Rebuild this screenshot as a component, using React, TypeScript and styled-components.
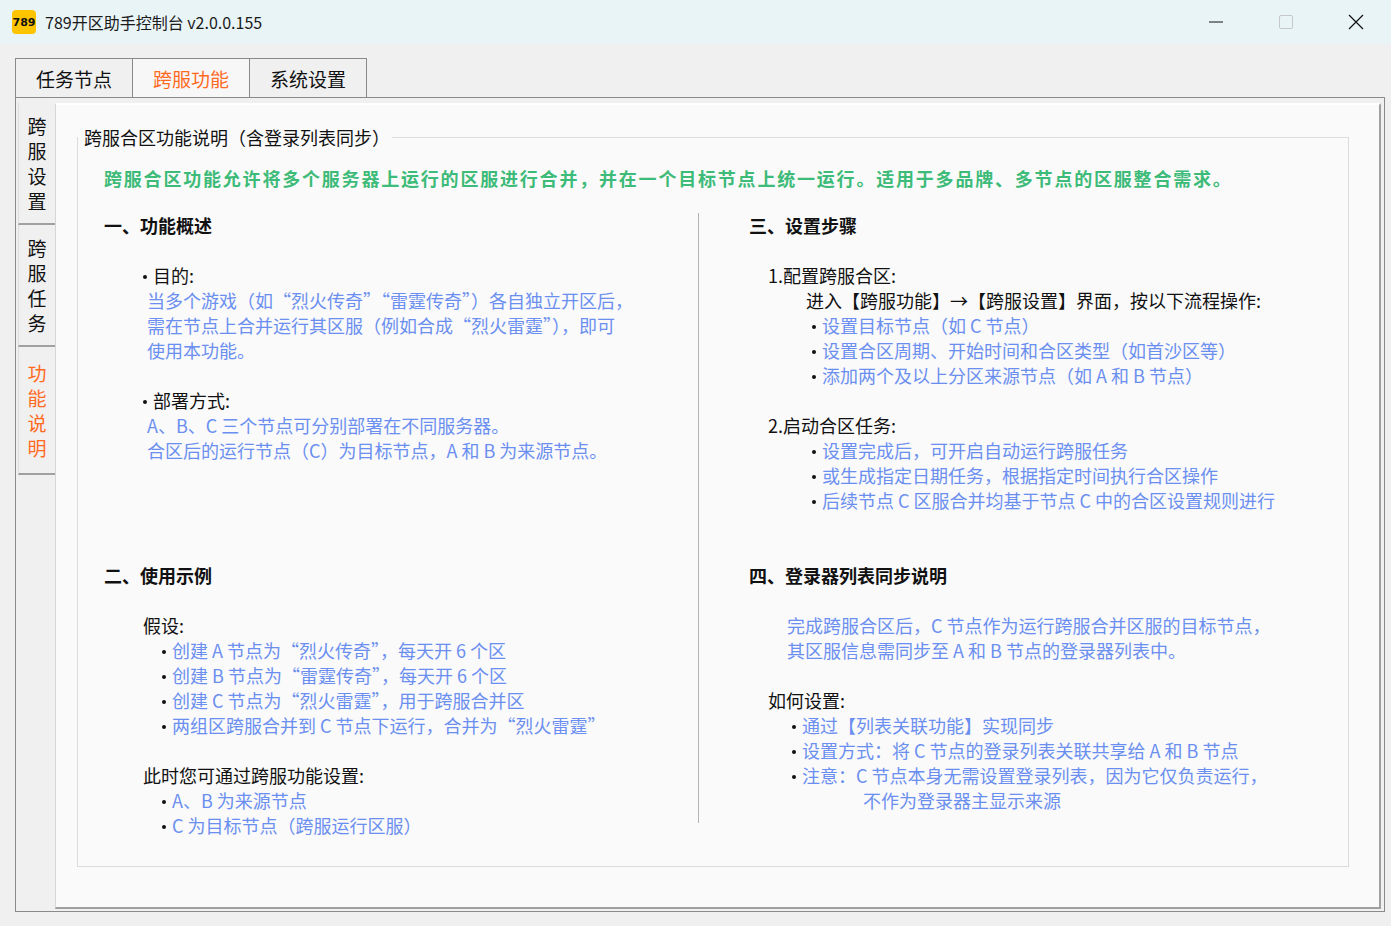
import React from 'react';
import styled, { createGlobalStyle } from 'styled-components';

const Global = createGlobalStyle`
  html, body { margin: 0; padding: 0; background: #f0f0f0; }
  body { font-family: "Noto Sans CJK SC", "Noto Sans", sans-serif; }
`;

const Window = styled.div`
  width: 1391px;
  height: 926px;
  background: #f0f0f0;
  display: flex;
  flex-direction: column;
  overflow: hidden;
`;

const TitleBar = styled.div`
  height: 44px;
  flex: none;
  background: #e9f4f6;
  display: flex;
  align-items: center;
  padding-left: 12px;
  font-size: 16px;
  color: #1a1a1a;
`;

const Logo = styled.div`
  width: 24px;
  height: 24px;
  border-radius: 4px;
  background: #ffc400;
  color: #111;
  font: bold 11px "DejaVu Sans", sans-serif;
  display: flex;
  align-items: center;
  justify-content: center;
  margin-right: 9px;
`;

const Title = styled.div`
  flex: 1;
`;

const WinButton = styled.div`
  width: 70px;
  height: 44px;
  display: flex;
  align-items: center;
  justify-content: center;
`;

const Body = styled.div`
  flex: 1;
  min-height: 0;
  padding: 14px 6px 14px 15px;
  display: flex;
  flex-direction: column;
`;

const TabRow = styled.div`
  display: flex;
  height: 39px;
  flex: none;
`;

const Tab = styled.div<{ $active?: boolean }>`
  width: 116px;
  border: 1px solid #8a8a8a;
  border-bottom: none;
  margin-right: -1px;
  display: flex;
  align-items: center;
  justify-content: center;
  font-size: 19px;
  color: ${(p) => (p.$active ? '#ff6a1f' : '#111')};
  background: ${(p) => (p.$active ? '#f7f7f7' : '#f0f0f0')};
`;

const Panel = styled.div`
  flex: 1;
  min-height: 0;
  border: 1px solid #8a8a8a;
  display: flex;
  padding: 5px 3px 2px 2px;
  background: #f0f0f0;
`;

const SideTabs = styled.div`
  width: 37px;
  display: flex;
  flex-direction: column;
`;

const SideTab = styled.div<{ $active?: boolean }>`
  height: ${(p) => (p.$active ? '126px' : '120px')};
  display: flex;
  flex-direction: column;
  align-items: center;
  justify-content: center;
  font-size: 19px;
  line-height: 25px;
  color: ${(p) => (p.$active ? '#ff6a1f' : '#111')};
  border-bottom: 2px solid #a0a0a0;
  border-left: 1px solid #ddd;
`;

const Content = styled.div`
  flex: 1;
  min-height: 0;
  overflow: hidden;
  background: #fafafa;
  border-left: 1px solid #d6d6d6;
  border-top: 2px solid #fff;
  border-right: 2px solid #a0a0a0;
  border-bottom: 2px solid #a0a0a0;
  padding: 19px 30px 0 21px;
`;

const GroupBox = styled.fieldset`
  margin: 0;
  height: 743px;
  box-sizing: border-box;
  border: 1px solid #dcdcdc;
  padding: 0;
  font-size: 18px;
`;

const Legend = styled.legend`
  font-size: 18px;
  color: #111;
  padding: 0 2px 0 6px;
  margin-left: 0;
`;

const Inner = styled.div`
  padding: 0 0 0 26px;
`;

const Intro = styled.div`
  color: #3dbb78;
  font-weight: bold;
  font-size: 18px;
  line-height: 25px;
  letter-spacing: 1.8px;
  margin-top: 16px;
  margin-bottom: 22px;
`;

const Columns = styled.div`
  display: grid;
  grid-template-columns: 594px 1px 1fr;
`;

const Divider = styled.div`
  background: #b4b4b4;
  height: 610px;
`;

const Column = styled.div<{ $pad?: number }>`
  padding-left: ${(p) => p.$pad || 0}px;
`;

const Section = styled.div`
  height: 350px;
`;

const Heading = styled.div`
  font-weight: bold;
  line-height: 25px;
  color: #111;
  margin-bottom: 25px;
`;

const Line = styled.div<{ $indent: number; $blue?: boolean; $gap?: boolean }>`
  line-height: 25px;
  white-space: nowrap;
  padding-left: ${(p) => p.$indent}px;
  color: ${(p) => (p.$blue ? '#6b8ff0' : '#111')};
  margin-top: ${(p) => (p.$gap ? '25px' : '0')};
`;

const Dot = styled.span`
  display: inline-block;
  width: 4px;
  height: 4px;
  border-radius: 50%;
  background: #111;
  vertical-align: middle;
  margin: 0 6px 2px 0;
`;

const BlueText = styled.span`
  color: #6b8ff0;
`;

const Bullet = ({ indent, text }: { indent: number; text: string }) => (
  <Line $indent={indent}>
    <Dot />
    <BlueText>{text}</BlueText>
  </Line>
);

const chars = (s: string) => s.split('').map((c) => <span key={c}>{c}</span>);

export default function App() {
  return (
    <Window>
      <Global />
      <TitleBar>
        <Logo>789</Logo>
        <Title>789开区助手控制台 v2.0.0.155</Title>
        <WinButton>
          <svg width="16" height="16"><line x1="1" y1="8" x2="15" y2="8" stroke="#111" strokeWidth="1" /></svg>
        </WinButton>
        <WinButton>
          <svg width="16" height="16"><rect x="1.5" y="1.5" width="13" height="13" rx="1.5" fill="none" stroke="#c4c8ca" /></svg>
        </WinButton>
        <WinButton>
          <svg width="16" height="16"><path d="M1 1L15 15M15 1L1 15" stroke="#111" strokeWidth="1.2" /></svg>
        </WinButton>
      </TitleBar>
      <Body>
        <TabRow>
          <Tab>任务节点</Tab>
          <Tab $active>跨服功能</Tab>
          <Tab>系统设置</Tab>
        </TabRow>
        <Panel>
          <SideTabs>
            <SideTab>{chars('跨服设置')}</SideTab>
            <SideTab>{chars('跨服任务')}</SideTab>
            <SideTab $active>{chars('功能说明')}</SideTab>
          </SideTabs>
          <Content>
            <GroupBox>
              <Legend>跨服合区功能说明（含登录列表同步）</Legend>
              <Inner>
                <Intro>跨服合区功能允许将多个服务器上运行的区服进行合并，并在一个目标节点上统一运行。适用于多品牌、多节点的区服整合需求。</Intro>
                <Columns>
                  <Column>
                    <Section>
                      <Heading>一、功能概述</Heading>
                      <Line $indent={39}><Dot />目的:</Line>
                      <Line $indent={43} $blue>当多个游戏（如“烈火传奇”“雷霆传奇”）各自独立开区后，</Line>
                      <Line $indent={43} $blue>需在节点上合并运行其区服（例如合成“烈火雷霆”），即可</Line>
                      <Line $indent={43} $blue>使用本功能。</Line>
                      <Line $indent={39} $gap><Dot />部署方式:</Line>
                      <Line $indent={43} $blue>A、B、C 三个节点可分别部署在不同服务器。</Line>
                      <Line $indent={43} $blue>合区后的运行节点（C）为目标节点，A 和 B 为来源节点。</Line>
                    </Section>
                    <Section>
                      <Heading>二、使用示例</Heading>
                      <Line $indent={39}>假设:</Line>
                      <Bullet indent={58} text="创建 A 节点为“烈火传奇”，每天开 6 个区" />
                      <Bullet indent={58} text="创建 B 节点为“雷霆传奇”，每天开 6 个区" />
                      <Bullet indent={58} text="创建 C 节点为“烈火雷霆”，用于跨服合并区" />
                      <Bullet indent={58} text="两组区跨服合并到 C 节点下运行，合并为“烈火雷霆”" />
                      <Line $indent={39} $gap>此时您可通过跨服功能设置:</Line>
                      <Bullet indent={58} text="A、B 为来源节点" />
                      <Bullet indent={58} text="C 为目标节点（跨服运行区服）" />
                    </Section>
                  </Column>
                  <Divider />
                  <Column $pad={50}>
                    <Section>
                      <Heading>三、设置步骤</Heading>
                      <Line $indent={19}>1.配置跨服合区:</Line>
                      <Line $indent={57}>进入【跨服功能】→【跨服设置】界面，按以下流程操作:</Line>
                      <Bullet indent={63} text="设置目标节点（如 C 节点）" />
                      <Bullet indent={63} text="设置合区周期、开始时间和合区类型（如首沙区等）" />
                      <Bullet indent={63} text="添加两个及以上分区来源节点（如 A 和 B 节点）" />
                      <Line $indent={19} $gap>2.启动合区任务:</Line>
                      <Bullet indent={63} text="设置完成后，可开启自动运行跨服任务" />
                      <Bullet indent={63} text="或生成指定日期任务，根据指定时间执行合区操作" />
                      <Bullet indent={63} text="后续节点 C 区服合并均基于节点 C 中的合区设置规则进行" />
                    </Section>
                    <Section>
                      <Heading>四、登录器列表同步说明</Heading>
                      <Line $indent={38} $blue>完成跨服合区后，C 节点作为运行跨服合并区服的目标节点，</Line>
                      <Line $indent={38} $blue>其区服信息需同步至 A 和 B 节点的登录器列表中。</Line>
                      <Line $indent={19} $gap>如何设置:</Line>
                      <Bullet indent={43} text="通过【列表关联功能】实现同步" />
                      <Bullet indent={43} text="设置方式：将 C 节点的登录列表关联共享给 A 和 B 节点" />
                      <Bullet indent={43} text="注意：C 节点本身无需设置登录列表，因为它仅负责运行，" />
                      <Line $indent={114} $blue>不作为登录器主显示来源</Line>
                    </Section>
                  </Column>
                </Columns>
              </Inner>
            </GroupBox>
          </Content>
        </Panel>
      </Body>
    </Window>
  );
}
